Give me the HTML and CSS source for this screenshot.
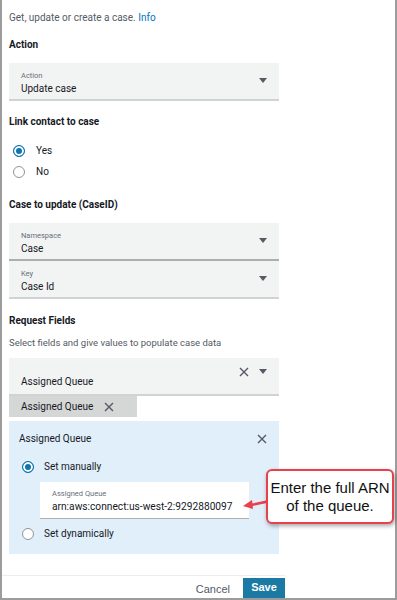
FILE: index.html
```html
<!DOCTYPE html>
<html lang="en">
<head>
  <meta charset="UTF-8">
  <title>Cases block</title>
  <link rel="stylesheet" href="styles.css">
</head>
<body>
  <div class="panel">
    <div class="content">
      <p class="intro">Get, update or create a case. <a href="#">Info</a></p>

      <h4 class="heading">Action</h4>
      <div class="select">
        <div class="select-text">
          <span class="select-label">Action</span>
          <span class="select-value">Update case</span>
        </div>
        <span class="caret"></span>
      </div>

      <h4 class="heading">Link contact to case</h4>
      <div class="radios">
        <label class="radio-row"><span class="radio checked"></span>Yes</label>
        <label class="radio-row"><span class="radio"></span>No</label>
      </div>

      <h4 class="heading">Case to update (CaseID)</h4>
      <div class="select">
        <div class="select-text">
          <span class="select-label">Namespace</span>
          <span class="select-value">Case</span>
        </div>
        <span class="caret"></span>
      </div>
      <div class="select">
        <div class="select-text">
          <span class="select-label">Key</span>
          <span class="select-value">Case Id</span>
        </div>
        <span class="caret"></span>
      </div>

      <h4 class="heading fields-heading">Request Fields</h4>
      <p class="desc">Select fields and give values to populate case data</p>
      <div class="select multi">
        <div class="select-text">
          <span class="select-value">Assigned Queue</span>
        </div>
        <svg class="clear" width="10" height="10" viewBox="0 0 10 10"><path d="M1 1L9 9M9 1L1 9" stroke="#545b64" stroke-width="1.4"/></svg>
        <span class="caret"></span>
      </div>
      <div class="tokens">
        <span class="token">Assigned Queue
          <svg width="10" height="10" viewBox="0 0 10 10"><path d="M1 1L9 9M9 1L1 9" stroke="#545b64" stroke-width="1.4"/></svg>
        </span>
      </div>

      <div class="field-card">
        <div class="card-head">
          <span>Assigned Queue</span>
          <svg width="10" height="10" viewBox="0 0 10 10"><path d="M1 1L9 9M9 1L1 9" stroke="#545b64" stroke-width="1.4"/></svg>
        </div>
        <label class="radio-row"><span class="radio checked"></span>Set manually</label>
        <div class="input">
          <span class="select-label">Assigned Queue</span>
          <span class="input-value">arn:aws:connect:us-west-2:9292880097</span>
        </div>
        <label class="radio-row"><span class="radio"></span>Set dynamically</label>
      </div>
    </div>

    <div class="footer">
      <button class="btn-link">Cancel</button>
      <button class="btn-save">Save</button>
    </div>

    <svg class="arrow" width="30" height="14" viewBox="0 0 30 14">
      <path d="M28 3L9 7" stroke="#e8414b" stroke-width="2.5" fill="none"/>
      <path d="M1 8L10 2L11 11Z" fill="#e8414b"/>
    </svg>
    <div class="callout">Enter the full ARN of the queue.</div>
  </div>
</body>
</html>
```

FILE: styles.css
```css
* {
  margin: 0;
  padding: 0;
  box-sizing: border-box;
}
body {
  width: 397px;
  height: 600px;
  overflow: hidden;
  font-family: Roboto, 'Noto Sans', sans-serif;
  color: #16191f;
  background: #fff;
}
.panel {
  position: relative;
  width: 397px;
  height: 600px;
  border: 2px solid #9c9c9c;
  border-top: none;
  background: #fff;
}
.content {
  width: 277px;
  padding: 11px 0 0 7px;
}
.intro {
  font-size: 10px;
  color: #545b64;
  line-height: 13px;
}
.intro a {
  color: #0073bb;
  text-decoration: none;
}
.heading {
  font-size: 10px;
  font-weight: 700;
  line-height: 14px;
  color: #16191f;
  margin-top: 14px;
  margin-bottom: 11px;
}
.select {
  display: flex;
  align-items: center;
  height: 38px;
  background: #f2f3f3;
  border-bottom: 2px solid #cfd3d4;
  padding: 0 12px 0 12px;
}
.select:has(+ .select) {
  border-bottom-color: #aab0b2;
}
.select-text {
  flex: 1;
  display: flex;
  flex-direction: column;
  padding-top: 4px;
}
.select-label {
  font-size: 7.5px;
  color: #687078;
  line-height: 10px;
}
.select-value {
  font-size: 10px;
  line-height: 15px;
  color: #16191f;
}
.caret {
  width: 0;
  height: 0;
  border-left: 4.5px solid transparent;
  border-right: 4.5px solid transparent;
  border-top: 5px solid #545b64;
  margin-top: -2px;
}
.radios {
  display: flex;
  flex-direction: column;
  gap: 9px;
  padding-left: 4px;
  padding-top: 5px;
}
.radio-row {
  display: flex;
  align-items: center;
  gap: 11px;
  font-size: 10px;
  line-height: 12px;
  color: #16191f;
}
.radio {
  width: 12px;
  height: 12px;
  border-radius: 50%;
  border: 1px solid #8d9596;
  background: #fff;
}
.radio.checked {
  border-color: #0a6fa7;
  background: #0a76b3;
  box-shadow: inset 0 0 0 2px #fff;
}
.radios + .heading {
  margin-top: 20px;
}
.select + .heading {
  margin-top: 14px;
}
.select + .fields-heading {
  margin-top: 15px;
}
.desc {
  font-size: 9.5px;
  color: #545b64;
  line-height: 13px;
  margin-top: -3px;
  margin-bottom: 9px;
}
.multi {
  align-items: flex-end;
  padding-bottom: 5px;
  gap: 10px;
}
.multi .clear,
.multi .caret {
  align-self: center;
  margin-top: -4px;
}
.tokens {
  display: flex;
}
.token {
  display: flex;
  align-items: center;
  gap: 11px;
  width: 128px;
  height: 21px;
  padding-left: 12px;
  background: #d5d6d6;
  font-size: 10px;
  color: #16191f;
}
.field-card {
  margin-top: 4px;
  height: 133px;
  background: #e1effa;
  padding: 12px 12px 0 10px;
}
.card-head {
  display: flex;
  justify-content: space-between;
  align-items: center;
  font-size: 10px;
  color: #16191f;
  margin-bottom: 17px;
}
.field-card .radio-row {
  padding-left: 3px;
  gap: 10px;
}
.input {
  display: flex;
  flex-direction: column;
  margin: 9px 18px 9px 21px;
  height: 37px;
  background: #fff;
  border-bottom: 1.5px solid #aab0b2;
  padding: 7px 0 0 12px;
}
.input-value {
  font-size: 10.2px;
  line-height: 16px;
  white-space: nowrap;
  color: #16191f;
}
.footer {
  position: absolute;
  left: 0;
  right: 0;
  bottom: 0;
  height: 23px;
  width: 283px;
  border-top: 1px solid #eceeee;
  display: flex;
  justify-content: flex-end;
  align-items: flex-end;
  gap: 13px;
}
.btn-link {
  border: none;
  background: none;
  font-family: 'Liberation Sans', Arial, sans-serif;
  font-size: 11px;
  color: #545b64;
  padding-bottom: 3px;
}
.btn-save {
  border: none;
  width: 42px;
  height: 20px;
  background: #1b7aa3;
  color: #fff;
  font-family: 'Liberation Sans', Arial, sans-serif;
  font-size: 11px;
  font-weight: 700;
  padding-bottom: 2px;
}
.callout {
  position: absolute;
  left: 264px;
  top: 469px;
  width: 128px;
  height: 55px;
  border: 2.5px solid #e8414b;
  border-radius: 6px;
  background: #fff;
  box-shadow: 1px 2px 4px rgba(0, 0, 0, 0.35);
  font-family: 'Liberation Sans', Arial, sans-serif;
  font-size: 15px;
  line-height: 18px;
  color: #111;
  text-align: center;
  display: flex;
  align-items: center;
  justify-content: center;
  padding: 0 2px;
}
.arrow {
  position: absolute;
  left: 240px;
  top: 498px;
}
```
